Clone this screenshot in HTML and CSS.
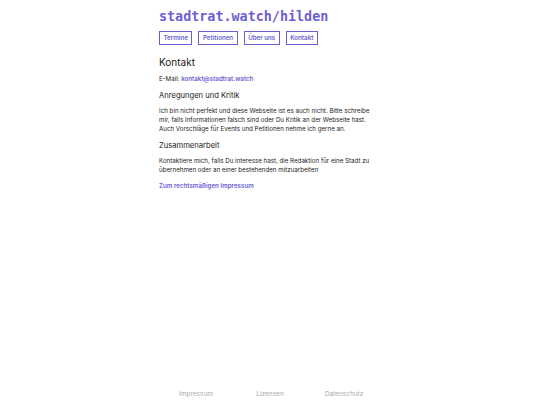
FILE: index.html
```html
<!DOCTYPE html>
<html lang="de">
<head>
<meta charset="utf-8">
<title>Kontakt – stadtrat.watch/hilden</title>
<link rel="stylesheet" href="styles.css">
</head>
<body>
<div class="page">
  <header class="header">
    <a class="brand" href="#">stadtrat.watch/hilden</a>
    <nav class="nav">
      <a class="nav-btn" href="#">Termine</a>
      <a class="nav-btn" href="#">Petitionen</a>
      <a class="nav-btn" href="#">Über uns</a>
      <a class="nav-btn" href="#">Kontakt</a>
    </nav>
  </header>
  <main class="content">
    <h1 class="title">Kontakt</h1>
    <p class="text">E-Mail: <a class="link" href="#">kontakt@stadtrat.watch</a></p>
    <h2 class="subtitle">Anregungen und Kritik</h2>
    <p class="text">Ich bin nicht perfekt und diese Webseite ist es auch nicht. Bitte schreibe mir, falls Informationen falsch sind oder Du Kritik an der Webseite hast. Auch Vorschläge für Events und Petitionen nehme ich gerne an.</p>
    <h2 class="subtitle">Zusammenarbeit</h2>
    <p class="text">Kontaktiere mich, falls Du interesse hast, die Redaktion für eine Stadt zu übernehmen oder an einer bestehenden mitzuarbeiten</p>
    <p class="text"><a class="link" href="#">Zum rechtsmäßigen Impressum</a></p>
  </main>
  <footer class="footer">
    <a class="foot-link" href="#">Impressum</a>
    <a class="foot-link" href="#">Lizensen</a>
    <a class="foot-link" href="#">Datenschutz</a>
  </footer>
</div>
</body>
</html>
```
FILE: styles.css
```css
* { box-sizing: border-box; }
html, body { margin: 0; padding: 0; }
body {
  font-family: Inter, "Noto Sans", sans-serif;
  color: #1a1a1a;
  background: #fff;
}
.page {
  width: 222px;
  margin: 0 auto;
  min-height: 405px;
  display: flex;
  flex-direction: column;
  padding-top: 9px;
}
.header { display: flex; flex-direction: column; gap: 6px; }
.brand {
  font-family: "DejaVu Sans Mono", monospace;
  font-weight: bold;
  font-size: 13.4px;
  line-height: 16px;
  color: #6c5fd3;
  text-decoration: none;
}
.nav { display: flex; gap: 6px; }
.nav-btn {
  display: block;
  border: 1px solid #6c5fd3;
  color: #6c5fd3;
  font-size: 6.2px;
  font-weight: 600;
  line-height: 11.5px;
  padding: 0 3.5px;
  text-decoration: none;
}
.content { display: flex; flex-direction: column; padding-top: 10px; }
.title { font-size: 10px; font-weight: 400; margin: 0 0 6px; line-height: 14px; }
.subtitle { font-size: 7.6px; font-weight: 400; margin: 0 0 6px; line-height: 11px; }
.text { font-size: 6.2px; line-height: 8.7px; margin: 0 0 7px; }
.link { color: #6c5fd3; font-weight: 600; text-decoration: none; }
.footer {
  margin-top: auto;
  display: grid;
  grid-template-columns: 1fr 1fr 1fr;
  text-align: center;
  padding-bottom: 6px;
}
.foot-link { color: #aaa; font-size: 6.5px; text-decoration: none; line-height: 9px; }
```
